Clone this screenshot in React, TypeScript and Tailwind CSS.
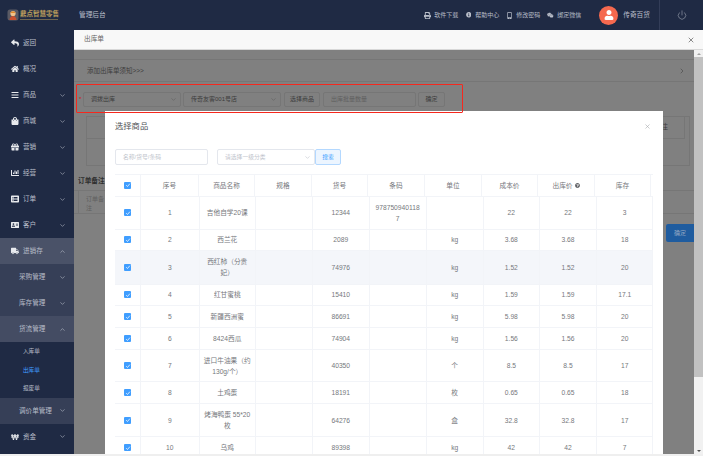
import type { ReactNode } from "react";
import { ChevronDown, ChevronRight, ChevronUp, Power, X } from "lucide-react";
import {
  FaAddressCard,
  FaBars,
  FaChartBar,
  FaGift,
  FaHome,
  FaInfoCircle,
  FaListAlt,
  FaMobileAlt,
  FaPrint,
  FaQuestionCircle,
  FaReply,
  FaShoppingBag,
  FaTruck,
  FaUser,
  FaWeixin,
  FaWonSign,
} from "react-icons/fa";

type MenuItem = {
  label: string;
  icon?: ReactNode;
  level?: 2 | 3;
  arrow?: "up" | "down";
  active?: boolean;
  bg?: string;
};

const menu: MenuItem[] = [
  { label: "返回", icon: <FaReply /> },
  { label: "概况", icon: <FaHome /> },
  { label: "商品", icon: <FaBars />, arrow: "down" },
  { label: "商城", icon: <FaShoppingBag />, arrow: "down" },
  { label: "营销", icon: <FaGift />, arrow: "down" },
  { label: "经营", icon: <FaChartBar />, arrow: "down" },
  { label: "订单", icon: <FaListAlt />, arrow: "down" },
  { label: "客户", icon: <FaAddressCard />, arrow: "down" },
  { label: "进销存", icon: <FaTruck />, arrow: "up", bg: "bg-[#4a5268]" },
  { label: "采购管理", level: 2, arrow: "down", bg: "bg-[#363f57]" },
  { label: "库存管理", level: 2, arrow: "down", bg: "bg-[#363f57]" },
  { label: "货流管理", level: 2, arrow: "up", bg: "bg-[#444c63]" },
  { label: "入库单", level: 3 },
  { label: "出库单", level: 3, active: true },
  { label: "报废单", level: 3 },
  { label: "调价单管理", level: 2, arrow: "down", bg: "bg-[#363f57]" },
  { label: "资金", icon: <FaWonSign />, arrow: "down" },
];

const topLinks = [
  { label: "软件下载", icon: <FaPrint className="text-[7px]" /> },
  { label: "帮助中心", icon: <FaInfoCircle className="text-[5.5px]" /> },
  { label: "修改密码", icon: <FaMobileAlt className="text-[7px]" /> },
  { label: "绑定微信", icon: <FaWeixin className="text-[6.5px]" /> },
];

const headers = ["序号", "商品名称", "规格", "货号", "条码", "单位", "成本价", "出库价", "库存"];

const rows = [
  { no: 1, name: "吉他自学20课", sn: "12344", code: "978750940118\n7", unit: "", cost: "22", price: "22", stock: "3", h: "h-[33px]" },
  { no: 2, name: "西兰花", sn: "2089", code: "", unit: "kg", cost: "3.68", price: "3.68", stock: "18", h: "h-[21px]" },
  { no: 3, name: "西红柿（分贵\n妃）", sn: "74976", code: "", unit: "kg", cost: "1.52", price: "1.52", stock: "20", h: "h-[34px]", hover: true },
  { no: 4, name: "红甘蜜桃", sn: "15410", code: "", unit: "kg", cost: "1.59", price: "1.59", stock: "17.1", h: "h-[21.5px]" },
  { no: 5, name: "新疆西洲蜜", sn: "86691", code: "", unit: "kg", cost: "5.98", price: "5.98", stock: "20", h: "h-[22px]" },
  { no: 6, name: "8424西瓜", sn: "74904", code: "", unit: "kg", cost: "1.56", price: "1.56", stock: "20", h: "h-[22px]" },
  { no: 7, name: "进口牛油果（约\n130g/个）", sn: "40350", code: "", unit: "个", cost: "8.5", price: "8.5", stock: "17", h: "h-[32px]" },
  { no: 8, name: "土鸡蛋", sn: "18191", code: "", unit: "枚", cost: "0.65", price: "0.65", stock: "18", h: "h-[22px]" },
  { no: 9, name: "烤海鸭蛋 55*20\n枚", sn: "64276", code: "", unit: "盒", cost: "32.8", price: "32.8", stock: "17", h: "h-[33px]" },
  { no: 10, name: "乌鸡", sn: "89398", code: "", unit: "kg", cost: "42", price: "42", stock: "7", h: "h-[22px]" },
];

const Checkbox = () => (
  <span className="flex h-[7px] w-[7px] items-center justify-center rounded-[1px] bg-[#409eff]">
    <svg viewBox="0 0 8 8" className="h-[6px] w-[6px]" fill="none" stroke="#fff" strokeWidth="1">
      <path d="M1.5 4.2 3.3 6l3.2-3.8" />
    </svg>
  </span>
);

const Cell = ({ children }: { children?: ReactNode }) => (
  <div className="flex items-center justify-center whitespace-pre-line border-r border-[#f2f4f8] text-center leading-[11px]">
    {children}
  </div>
);

const Sidebar = () => (
  <aside className="flex w-[74px] shrink-0 flex-col bg-[#1f2a44] text-[#b9bec9]">
    {menu.map((item) => (
      <div
        key={item.label}
        className={`flex items-center pr-[8px] ${item.level === 3 ? "h-[18.67px] pl-[23px] text-[5.6px]" : "h-[26px] text-[6.6px]"} ${item.level === 2 ? "pl-[19px]" : ""} ${!item.level ? "pl-[11px]" : ""} ${item.bg ?? ""} ${item.active ? "text-[#409eff]" : ""}`}
      >
        {item.icon && <span className="flex w-[12px] shrink-0 text-[8px] text-[#e8eaee]">{item.icon}</span>}
        <span className="flex-1 whitespace-nowrap">{item.label}</span>
        {item.arrow === "down" && <ChevronDown size={7} />}
        {item.arrow === "up" && <ChevronUp size={7} />}
      </div>
    ))}
  </aside>
);

const TopBar = () => (
  <header className="flex h-[30px] shrink-0 items-center bg-[#1f2a44] text-[#b9bec9]">
    <div className="flex w-[79px] shrink-0 items-center pl-[7px]">
      <svg viewBox="0 0 12 12" className="h-[12px] w-[12px] shrink-0">
        <rect x="0.5" y="0.5" width="11" height="11" rx="2.5" fill="#5a5a64" />
        <circle cx="6" cy="4.5" r="2.6" fill="#f0c28a" />
        <path d="M2.5 11c.3-3 1.8-4 3.5-4s3.2 1 3.5 4z" fill="#c9502f" />
        <path d="M3.4 4c.5-2 4.6-2 5.2 0z" fill="#e08a2e" />
      </svg>
      <div className="ml-[1px] flex flex-col">
        <span className="whitespace-nowrap text-[6.5px] font-bold leading-[8px] text-[#b79a5c]">鼎点智慧零售</span>
        <span className="mt-[1px] h-px w-[38px] bg-[#6f6550]" />
      </div>
    </div>
    <span className="text-[6.7px]">管理后台</span>
    <nav className="ml-auto flex items-center gap-[7px] text-[6px]">
      {topLinks.map((link) => (
        <span key={link.label} className="flex items-center gap-[3px] whitespace-nowrap">
          <span className="flex w-[7px] justify-center">{link.icon}</span>
          {link.label}
        </span>
      ))}
    </nav>
    <span className="ml-[18px] flex h-[19px] w-[19px] items-center justify-center rounded-full bg-[#f5694f] text-[10px] text-white">
      <FaUser />
    </span>
    <span className="ml-[5px] text-[6.7px]">传奇百货</span>
    <div className="ml-[9px] flex h-full w-[44px] items-center justify-center border-l border-[#333d58]">
      <Power size={10} strokeWidth={1.2} />
    </div>
  </header>
);

const PageSelect = ({ value, width }: { value: string; width: string }) => (
  <div className={`flex h-[15px] items-center justify-between rounded-[2px] border border-[#767676] pl-[7px] pr-[3px] ${width}`}>
    <span>{value}</span>
    <ChevronDown size={7} className="text-[#5e5e5e]" />
  </div>
);

const PageButton = ({ children, width }: { children: ReactNode; width: string }) => (
  <div className={`flex h-[15px] items-center justify-center rounded-[2px] border border-[#767676] ${width}`}>{children}</div>
);

// the page lying behind the dialog, already dimmed
const DimmedPage = () => (
  <div className="flex flex-1 flex-col text-[6px] text-[#3c3c3c]">
    <div className="mt-[9px] flex h-[23px] items-center justify-between border-y border-[#767676] pl-[13px] pr-[8px] text-[6.5px]">
      <span>添加出库单须知&gt;&gt;&gt;</span>
      <ChevronRight size={8} className="text-[#4a4a4a]" />
    </div>
    <div className="mt-[10px] flex items-center pl-[5px]">
      <span className="mr-[2px] w-[2px] text-[#c02020]">*</span>
      <PageSelect value="调拨出库" width="w-[98px]" />
      <div className="w-[2px]" />
      <PageSelect value="传奇友客001号店" width="w-[98px]" />
      <div className="w-[3px]" />
      <PageButton width="w-[36px]">选择商品</PageButton>
      <div className="w-[3px]" />
      <div className="flex h-[15px] w-[93px] items-center rounded-[2px] border border-[#767676] pl-[7px] text-[#5f5f5f]">出库批量数量</div>
      <div className="w-[2px]" />
      <PageButton width="w-[27px]">确定</PageButton>
    </div>
    <div className="ml-[12px] mr-[4px] mt-[9px] h-[50px] border border-[#767676]">
      <div className="mr-[4px] flex h-[22px] items-center justify-end border-b border-r border-[#767676] pr-[16px] text-[7px]">注</div>
    </div>
    <div className="ml-[4px] mt-[10px] text-[6.7px] font-bold leading-[10px] text-[#2e2e2e]">订单备注</div>
    <div className="mt-[4px] flex h-[24px] items-start border-y border-[#767676] pl-[4px]">
      <div className="h-full w-[30px] border-l border-[#767676] pl-[7px] pt-[4px] text-[#5f5f5f]">订单备注</div>
    </div>
    <div className="mt-[10px] flex justify-end">
      <div className="flex h-[18px] w-[28px] items-center justify-center rounded-l-[2px] bg-[#1f5c9f] text-[#8fa6c2]">确定</div>
    </div>
  </div>
);

const GoodsDialog = () => (
  <div className="absolute left-[31px] top-[61px] bottom-0 w-[558px] overflow-hidden bg-white px-[10px] text-[6.7px] text-[#75777c]">
    <div className="flex h-[30px] items-center justify-between pr-[2px]">
      <span className="text-[8.3px] text-[#505256]">选择商品</span>
      <X size={7} className="text-[#a6a9ad]" />
    </div>
    <div className="flex h-[33px] items-start pt-[8px] text-[#c0c4cc]">
      <div className="flex h-[16px] w-[93px] items-center rounded-[2px] border border-[#e4e7ed] pl-[7px] text-[5.8px]">名称/货号/条码</div>
      <div className="ml-[9px] flex h-[16px] w-[98px] items-center justify-between rounded-[2px] border border-[#e4e7ed] pl-[7px] pr-[3px] text-[5.8px]">
        请选择一级分类
        <ChevronDown size={7} />
      </div>
      <div className="flex h-[16px] w-[26px] items-center justify-center rounded-[2px] border border-[#b3d8ff] bg-[#ecf5ff] text-[5.8px] text-[#409eff]">搜索</div>
    </div>
    <div className="grid h-[22.5px] grid-cols-[26px_58px_56px_57px_56px_57px_57px_56px_57px_56px] border-y border-[#f2f4f8]">
      <Cell>
        <Checkbox />
      </Cell>
      {headers.map((title) => (
        <Cell key={title}>
          {title}
          {title === "出库价" && <FaQuestionCircle className="ml-[2px] text-[5px] text-[#606266]" />}
        </Cell>
      ))}
    </div>
    {rows.map((row) => (
      <div
        key={row.no}
        className={`grid grid-cols-[26px_58.5px_56.5px_57px_56.5px_57.2px_57px_56.3px_57px_56.5px] border-b border-[#f2f4f8] ${row.h} ${row.hover ? "bg-[#f4f6fa]" : ""}`}
      >
        <Cell>
          <Checkbox />
        </Cell>
        <Cell>{row.no}</Cell>
        <Cell>{row.name}</Cell>
        <Cell />
        <Cell>{row.sn}</Cell>
        <Cell>{row.code}</Cell>
        <Cell>{row.unit}</Cell>
        <Cell>{row.cost}</Cell>
        <Cell>{row.price}</Cell>
        <Cell>{row.stock}</Cell>
      </div>
    ))}
  </div>
);

const PageScrollbar = () => (
  <div className="flex w-[9px] shrink-0 flex-col bg-[#f1f1f1] text-[#505050]">
    <div className="flex h-[7px] items-center justify-center">
      <span className="h-0 w-0 border-x-[2px] border-b-[2px] border-x-transparent border-b-[#a0a0a0]" />
    </div>
    <div className="h-[320px] bg-[#c1c1c1]" />
    <div className="flex-1" />
    <div className="flex h-[7px] items-center justify-center">
      <span className="h-0 w-0 border-x-[2px] border-t-[2px] border-x-transparent border-t-[#505050]" />
    </div>
  </div>
);

export default function App() {
  return (
    <div className="flex h-[456px] w-[703px] flex-col overflow-hidden bg-[#f1f1f1] [font-family:'Liberation_Sans','Noto_Sans_CJK_SC',sans-serif]">
      <TopBar />
      <div className="flex min-h-0 flex-1">
        <Sidebar />
        <main className="flex min-w-0 flex-1 flex-col">
          <div className="flex h-[20px] shrink-0 items-center justify-between border-b border-[#d8d8d8] bg-[#f8f8f8] pl-[10px] pr-[8px] text-[6.7px] text-[#666]">
            出库单
            <X size={8} className="text-[#555]" />
          </div>
          <div className="relative flex min-h-0 flex-1">
            <div className="flex flex-1 bg-[#808080]">
              <DimmedPage />
            </div>
            <PageScrollbar />
            <GoodsDialog />
            {/* red annotation drawn on the screenshot */}
            <div className="absolute left-[2px] top-[34px] h-[29px] w-[387px] rounded-[1px] border-[1.5px] border-[#f5281e]" />
          </div>
        </main>
      </div>
      <div className="h-[2px] shrink-0 bg-[#efefef]" />
    </div>
  );
}
